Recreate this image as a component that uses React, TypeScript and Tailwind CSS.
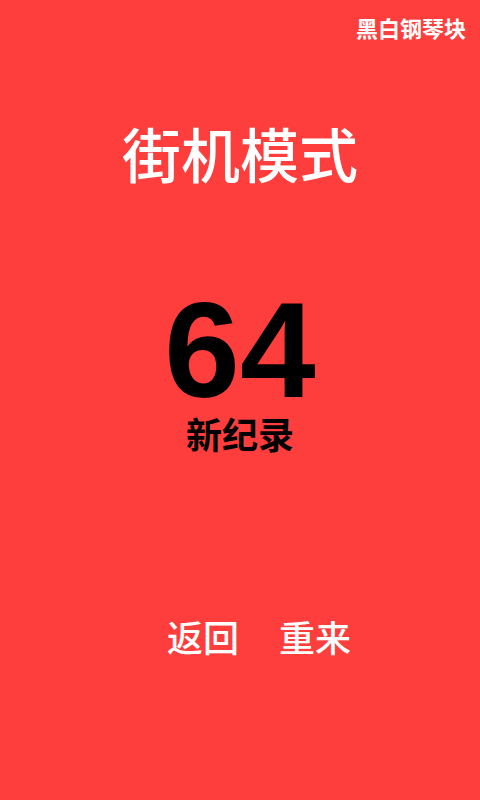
export default function App() {
  return (
    <div
      className="w-[480px] h-[800px] bg-[#fe3e3c] flex flex-col items-center overflow-hidden"
      style={{ fontFamily: '"Noto Sans CJK SC", "Noto Sans", sans-serif' }}
    >
      <div className="w-full flex justify-end pr-[14px] pt-[11px]">
        <span className="text-white text-[22px] font-bold leading-[32px]">黑白钢琴块</span>
      </div>

      <h1 className="mt-[74px] text-white text-[59px] font-medium leading-[72px]">街机模式</h1>

      <div
        className="mt-[101px] text-black text-[136px] font-bold leading-[120px]"
        style={{ fontFamily: '"Liberation Sans", Arial, sans-serif' }}
      >
        64
      </div>
      <div className="mt-[3px] text-black text-[36px] font-bold leading-[40px]">新纪录</div>

      <div className="mt-[161px] flex gap-[40px] pl-[38px] text-white text-[36px] font-medium leading-[44px]">
        <button>返回</button>
        <button>重来</button>
      </div>
    </div>
  );
}
